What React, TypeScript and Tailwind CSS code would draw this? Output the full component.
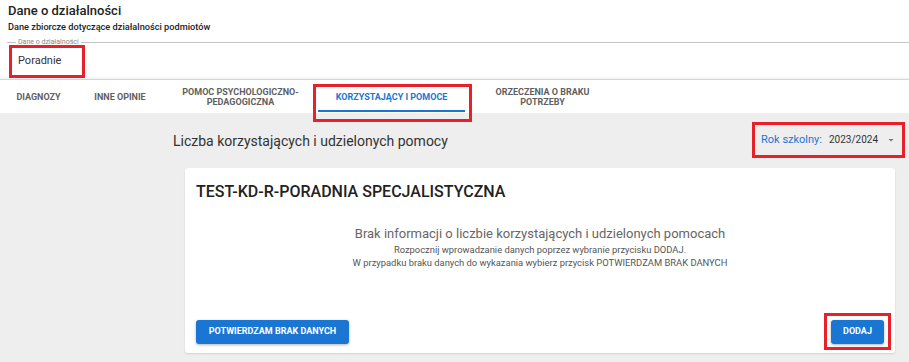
import React from "react";

const tabs = [
  { label: ["DIAGNOZY"], w: "w-[77px]" },
  { label: ["INNE OPINIE"], w: "w-[86px]" },
  { label: ["POMOC PSYCHOLOGICZNO-", "PEDAGOGICZNA"], w: "w-[155px]" },
  { label: ["KORZYSTAJĄCY I POMOCE"], w: "w-[147px]", active: true },
  { label: ["ORZECZENIA O BRAKU", "POTRZEBY"], w: "w-[155px]" },
];

function Tab({ label, w, active }: { label: string[]; w: string; active?: boolean }) {
  return (
    <div
      className={`${w} relative flex flex-col items-center justify-center text-center text-[9px] font-bold leading-[10px] ${
        active ? "text-[#1976d2]" : "text-[#5f5f5f]"
      }`}
    >
      {label.map((l) => (
        <span key={l}>{l}</span>
      ))}
      {active && <span className="absolute bottom-[1px] left-0 right-0 h-[2px] bg-[#1976d2]" />}
    </div>
  );
}

export default function App() {
  return (
    <div
      className="relative w-[909px] h-[362px] overflow-hidden bg-white text-[#212121]"
      style={{ fontFamily: "Roboto, 'Liberation Sans', sans-serif" }}
    >
      <header className="px-2 pt-[2px]">
        <h1 className="text-[13px] font-medium leading-[18px] text-[#222]">Dane o działalności</h1>
        <p className="text-[9.2px] font-medium leading-[13px] text-[#222]">
          Dane zbiorcze dotyczące działalności podmiotów
        </p>
      </header>

      <fieldset className="ml-[7px] mt-[5px] h-[41px] border-t border-[#c4c4c4]">
        <legend className="ml-[9px] px-[2px] text-[7px] leading-[8px] text-[#888]">Dane o działalności</legend>
        <div className="pl-[11px] pt-[8px] text-[11px] leading-[14px] text-[#333]">Poradnie</div>
      </fieldset>

      <nav className="flex h-[34px] border-t border-[#d6d6d6] bg-white shadow-[0_-1px_2px_rgba(0,0,0,0.08)]">
        {tabs.map((t) => (
          <Tab key={t.label[0]} {...t} />
        ))}
      </nav>

      <main className="h-[249px] bg-[#eeeeee] pl-[173px] pr-[4px]">
        <div className="flex items-start justify-between pt-[10px]">
          <h2 className="pt-[9px] text-[14px] leading-[18px] text-[#333]">
            Liczba korzystających i udzielonych pomocy
          </h2>
          <div className="flex items-start gap-[7px] pr-[10px] pt-[10px]">
            <span className="text-[11px] leading-[14px] text-[#1976d2]">Rok szkolny:</span>
            <div className="flex w-[66px] items-start justify-between border-b border-[#c8c8c8] pb-[10px]">
              <span className="text-[10px] leading-[14px] text-[#333]">2023/2024</span>
              <svg width="8" height="14" viewBox="0 0 8 14">
                <path d="M1.5 6 L4 8.5 L6.5 6 Z" fill="#777" />
              </svg>
            </div>
          </div>
        </div>

        <section className="ml-[12px] mr-[10px] mt-[10px] flex h-[185px] flex-col rounded-[3px] bg-white px-[11px] pb-[9px] shadow-[0_1px_2px_rgba(0,0,0,0.12)]">
          <h3 className="pt-[14px] text-[16px] font-medium leading-[20px] text-[#222]">
            TEST-KD-R-PORADNIA SPECJALISTYCZNA
          </h3>
          <div className="mt-[24px] flex flex-col items-center text-center">
            <p className="text-[13px] leading-[16px] text-[#666]">
              Brak informacji o liczbie korzystających i udzielonych pomocach
            </p>
            <p className="mt-[2px] text-[9.4px] leading-[12px] text-[#555]">
              Rozpocznij wprowadzanie danych poprzez wybranie przycisku DODAJ.
            </p>
            <p className="mt-[1px] text-[9.4px] leading-[12px] text-[#555]">
              W przypadku braku danych do wykazania wybierz przycisk POTWIERDZAM BRAK DANYCH
            </p>
          </div>
          <div className="mt-auto flex items-center justify-between">
            <button className="h-[24px] w-[153px] rounded-[3px] bg-[#1976d2] text-[9px] font-bold text-white shadow-[0_1px_3px_rgba(0,0,0,0.3)]">
              POTWIERDZAM BRAK DANYCH
            </button>
            <button className="h-[24px] w-[53px] rounded-[3px] bg-[#1976d2] text-[9px] font-bold text-white shadow-[0_1px_3px_rgba(0,0,0,0.3)]">
              DODAJ
            </button>
          </div>
        </section>
      </main>

      {/* red annotation boxes */}
      <div className="pointer-events-none absolute left-[9px] top-[45px] h-[33px] w-[76px] border-[3px] border-[#e8202a]" />
      <div className="pointer-events-none absolute left-[313px] top-[84px] h-[38px] w-[159px] border-[3px] border-[#e8202a]" />
      <div className="pointer-events-none absolute left-[752px] top-[122px] h-[36px] w-[153px] border-[3px] border-[#e8202a]" />
      <div className="pointer-events-none absolute left-[824px] top-[313px] h-[37px] w-[67px] border-[3px] border-[#e8202a]" />
    </div>
  );
}
